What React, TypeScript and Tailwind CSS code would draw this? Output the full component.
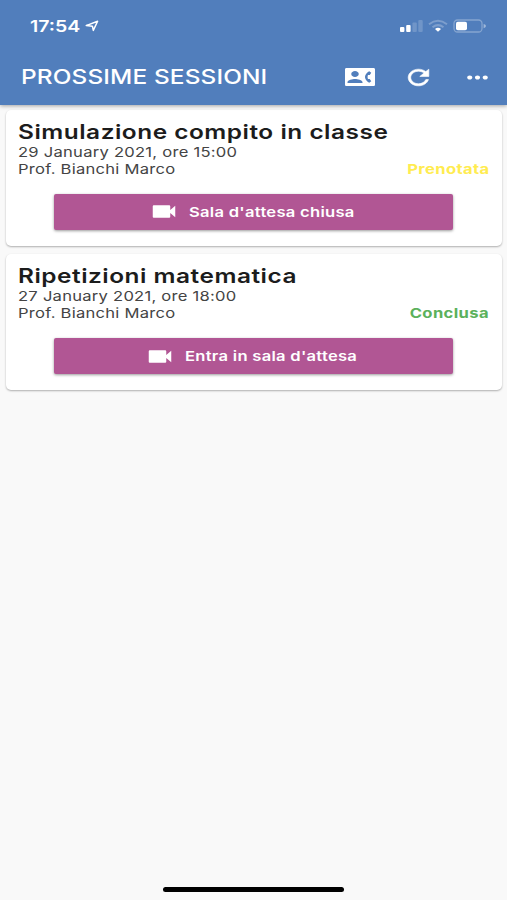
import type { ReactNode } from "react";
import clsx from "clsx";
import { MdMoreHoriz, MdVideocam } from "react-icons/md";

type Session = {
  title: string;
  date: string;
  teacher: string;
  status: string;
  statusClass: string;
  action: string;
  actionClass: string;
};

const sessions: Session[] = [
  {
    title: "Simulazione compito in classe",
    date: "29 January 2021, ore 15:00",
    teacher: "Prof. Bianchi Marco",
    status: "Prenotata",
    statusClass: "text-[#ffec50]",
    action: "Sala d'attesa chiusa",
    actionClass: "w-[169px]",
  },
  {
    title: "Ripetizioni matematica",
    date: "27 January 2021, ore 18:00",
    teacher: "Prof. Bianchi Marco",
    status: "Conclusa",
    statusClass: "text-[#5bb15b]",
    action: "Entra in sala d'attesa",
    actionClass: "w-[177px]",
  },
];

// Wide lettering: the glyphs are stretched horizontally from the given side.
function Wide({ children, className }: { children: ReactNode; className?: string }) {
  return (
    <span className={clsx("block w-max whitespace-nowrap scale-x-[1.22]", className)}>
      {children}
    </span>
  );
}

function StatusBar() {
  return (
    <div className="flex h-[52px] items-center pl-[30px] pr-[20px] text-white">
      <div className="w-[55px]">
        <Wide className="origin-left text-[16px] leading-5 font-semibold">17:54</Wide>
      </div>
      <svg className="h-[12px] w-[15px]" viewBox="0 0 15 12" fill="none">
        <path d="M1.2 5.6 12.6 1.3 8.3 10.4 7.4 6.2Z" stroke="currentColor" strokeWidth="1.5" strokeLinejoin="round" />
      </svg>
      <svg className="ml-auto h-[14px] w-[88px]" viewBox="0 0 88 14">
        <g fill="#fff">
          <rect x="1" y="8" width="4.4" height="5" rx="1" />
          <rect x="7.2" y="6" width="4.4" height="7" rx="1" />
          <rect x="13.4" y="3.5" width="4.4" height="9.5" rx="1" opacity=".18" />
          <rect x="19.3" y="1" width="4.4" height="12" rx="1" opacity=".18" />
        </g>
        <g fill="none" stroke="#fff" strokeWidth="2" opacity=".25">
          <path d="M30 5.2Q39 -1.7 48 5.2" />
          <path d="M33.5 8.2Q39 4 44.5 8.2" />
        </g>
        <path d="M36 9.9Q39 7.8 42 9.9L39 12.8Z" fill="#fff" />
        <rect x="55" y="1" width="28" height="12" rx="3.5" fill="none" stroke="#fff" strokeWidth="1.3" opacity=".3" />
        <path d="M84.6 5V9.2Q87 8.6 87 7.1T84.6 5" fill="#fff" opacity=".45" />
        <rect x="57" y="2.8" width="11" height="8.4" rx="1.8" fill="#fff" />
      </svg>
    </div>
  );
}

function ContactPhoneIcon() {
  return (
    <svg className="h-[24px] w-[30px]" viewBox="0 0 24 24" preserveAspectRatio="none" fill="currentColor">
      <path d="M22.8 3H1.2C.5 3 0 3.6 0 4.3v15.4c0 .7.5 1.3 1.2 1.3h21.6c.7 0 1.2-.6 1.2-1.3V4.3c0-.7-.5-1.3-1.2-1.3zM8 6c1.66 0 3 1.34 3 3s-1.34 3-3 3-3-1.34-3-3 1.34-3 3-3zm6 12H2v-1c0-2 4-3.1 6-3.1s6 1.1 6 3.1v1zm4.4-4h1.4L21 16.2l-1.6 1.6c-1.5-1-2.5-2.3-3-3.8-.3-.64-.4-1.31-.4-2s.1-1.36.4-2c.5-1.5 1.5-2.8 3-3.8L21 7.8 19.8 10h-1.4c-.22.63-.35 1.3-.35 2s.13 1.37.35 2z" />
    </svg>
  );
}

function RefreshIcon() {
  return (
    <svg className="h-[25px] w-[31px]" viewBox="0 0 24 24" preserveAspectRatio="none" fill="currentColor">
      <path
        stroke="currentColor"
        strokeWidth=".5"
        d="M17.65 6.35C16.2 4.9 14.21 4 12 4c-4.42 0-7.99 3.58-7.99 8s3.57 8 7.99 8c3.73 0 6.84-2.55 7.73-6h-2.08c-.82 2.33-3.04 4-5.65 4-3.31 0-6-2.69-6-6s2.69-6 6-6c1.66 0 3.14.69 4.22 1.78L13 11h7V4l-2.35 2.35z"
      />
    </svg>
  );
}

function AppBar() {
  return (
    <header className="relative h-[105px] bg-[#517ebc] text-white shadow-[0_1px_4px_rgba(0,0,0,0.35)]">
      <StatusBar />
      <div className="flex h-[50px] items-center pl-[21px] pr-[14px]">
        <h1>
          <Wide className="origin-left text-[20px] leading-6 font-medium tracking-[0.1px]">PROSSIME SESSIONI</Wide>
        </h1>
        <div className="ml-auto flex items-center gap-[28px]">
          <ContactPhoneIcon />
          <RefreshIcon />
          <MdMoreHoriz preserveAspectRatio="none" className="h-[25px] w-[31px]" />
        </div>
      </div>
    </header>
  );
}

function SessionCard({ session }: { session: Session }) {
  return (
    <article className="h-[136px] rounded-[5px] bg-white px-[12.5px] pt-[10px] shadow-[0_1px_2px_rgba(0,0,0,0.3)]">
      <h2 className="text-[#1c1c1c]">
        <Wide className="origin-left text-[20px] leading-[24px] font-semibold tracking-[0.42px]">{session.title}</Wide>
      </h2>
      <div className="text-[13.6px] leading-[17.3px] tracking-[0.2px] text-[#444]">
        <Wide className="origin-left">{session.date}</Wide>
        <div className="flex justify-between">
          <Wide className="origin-left">{session.teacher}</Wide>
          <Wide className={clsx("origin-right font-bold tracking-[0.3px]", session.statusClass)}>{session.status}</Wide>
        </div>
      </div>
      <button className="mx-auto mt-[15.5px] flex h-[36px] w-[399px] items-center justify-center gap-[10px] rounded-[2px] bg-[#b15694] text-white shadow-[0_1px_3px_rgba(0,0,0,0.4)]">
        <MdVideocam preserveAspectRatio="none" className="h-[25px] w-[30px]" />
        <span className={session.actionClass}>
          <Wide className="origin-left text-[13.6px] leading-5 font-semibold tracking-[0.22px]">{session.action}</Wide>
        </span>
      </button>
    </article>
  );
}

export default function App() {
  return (
    <div className="flex h-[900px] w-[507px] flex-col overflow-hidden bg-[#f9f9f9] font-['Inter',sans-serif]">
      <AppBar />
      <main className="flex flex-col gap-[8.5px] px-[5.5px] pt-[4.5px]">
        {sessions.map(session => (
          <SessionCard key={session.title} session={session} />
        ))}
      </main>
      <div className="mx-auto mt-auto mb-[8px] h-[5px] w-[181px] rounded-full bg-black" />
    </div>
  );
}
